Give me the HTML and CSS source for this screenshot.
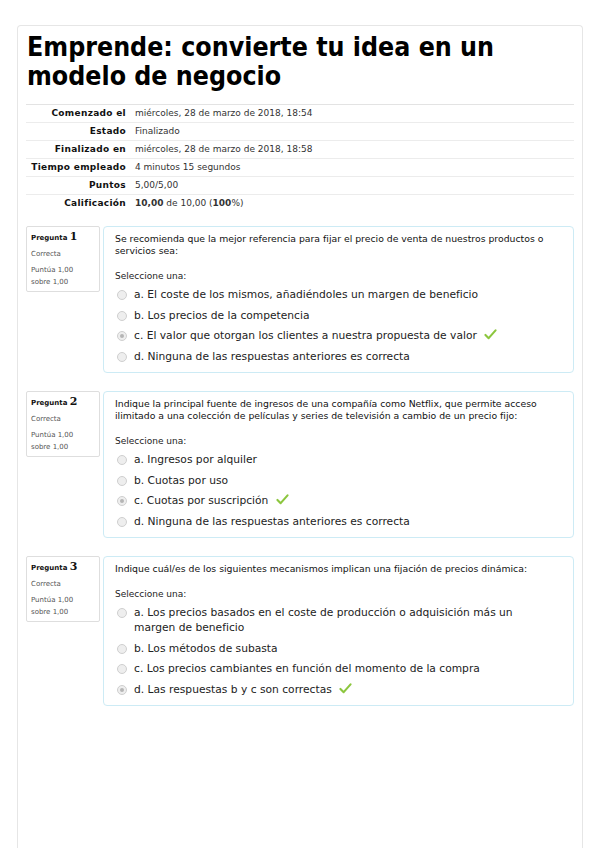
FILE: index.html
```html
<!DOCTYPE html>
<html lang="es">
<head>
<meta charset="utf-8">
<title>Emprende</title>
<link rel="stylesheet" href="styles.css">
</head>
<body>
<div class="page">
  <h1 class="title">Emprende: convierte tu idea en un modelo de negocio</h1>
  <table class="summary">
    <tr><th>Comenzado el</th><td>miércoles, 28 de marzo de 2018, 18:54</td></tr>
    <tr><th>Estado</th><td>Finalizado</td></tr>
    <tr><th>Finalizado en</th><td>miércoles, 28 de marzo de 2018, 18:58</td></tr>
    <tr><th>Tiempo empleado</th><td>4 minutos 15 segundos</td></tr>
    <tr><th>Puntos</th><td>5,00/5,00</td></tr>
    <tr><th>Calificación</th><td><b>10,00</b> de 10,00 (<b>100</b>%)</td></tr>
  </table>

  <div class="que first">
    <div class="info">
      <div class="qno">Pregunta <span class="num">1</span></div>
      <div class="state">Correcta</div>
      <div class="grade">Puntúa 1,00<br>sobre 1,00</div>
    </div>
    <div class="content">
      <div class="qtext">Se recomienda que la mejor referencia para fijar el precio de venta de nuestros productos o servicios sea:</div>
      <div class="prompt">Seleccione una:</div>
      <div class="answers">
        <div class="opt"><span class="radio"></span><span class="lbl">a. El coste de los mismos, añadiéndoles un margen de beneficio</span></div>
        <div class="opt"><span class="radio"></span><span class="lbl">b. Los precios de la competencia</span></div>
        <div class="opt"><span class="radio checked"></span><span class="lbl">c. El valor que otorgan los clientes a nuestra propuesta de valor <svg class="tick" viewBox="0 0 14 12" width="13" height="11"><path d="M1.5 6.5 L5 10 L12.5 1.5" fill="none" stroke="#8cc63e" stroke-width="2.3" stroke-linecap="round" stroke-linejoin="round"/></svg></span></div>
        <div class="opt"><span class="radio"></span><span class="lbl">d. Ninguna de las respuestas anteriores es correcta</span></div>
      </div>
    </div>
  </div>

  <div class="que">
    <div class="info">
      <div class="qno">Pregunta <span class="num">2</span></div>
      <div class="state">Correcta</div>
      <div class="grade">Puntúa 1,00<br>sobre 1,00</div>
    </div>
    <div class="content">
      <div class="qtext">Indique la principal fuente de ingresos de una compañía como Netflix, que permite acceso ilimitado a una colección de películas y series de televisión a cambio de un precio fijo:</div>
      <div class="prompt">Seleccione una:</div>
      <div class="answers">
        <div class="opt"><span class="radio"></span><span class="lbl">a. Ingresos por alquiler</span></div>
        <div class="opt"><span class="radio"></span><span class="lbl">b. Cuotas por uso</span></div>
        <div class="opt"><span class="radio checked"></span><span class="lbl">c. Cuotas por suscripción <svg class="tick" viewBox="0 0 14 12" width="13" height="11"><path d="M1.5 6.5 L5 10 L12.5 1.5" fill="none" stroke="#8cc63e" stroke-width="2.3" stroke-linecap="round" stroke-linejoin="round"/></svg></span></div>
        <div class="opt"><span class="radio"></span><span class="lbl">d. Ninguna de las respuestas anteriores es correcta</span></div>
      </div>
    </div>
  </div>

  <div class="que">
    <div class="info">
      <div class="qno">Pregunta <span class="num">3</span></div>
      <div class="state">Correcta</div>
      <div class="grade">Puntúa 1,00<br>sobre 1,00</div>
    </div>
    <div class="content">
      <div class="qtext">Indique cuál/es de los siguientes mecanismos implican una fijación de precios dinámica:</div>
      <div class="prompt">Seleccione una:</div>
      <div class="answers">
        <div class="opt"><span class="radio"></span><span class="lbl">a. Los precios basados en el coste de producción o adquisición más un margen de beneficio</span></div>
        <div class="opt"><span class="radio"></span><span class="lbl">b. Los métodos de subasta</span></div>
        <div class="opt"><span class="radio"></span><span class="lbl">c. Los precios cambiantes en función del momento de la compra</span></div>
        <div class="opt"><span class="radio checked"></span><span class="lbl">d. Las respuestas b y c son correctas <svg class="tick" viewBox="0 0 14 12" width="13" height="11"><path d="M1.5 6.5 L5 10 L12.5 1.5" fill="none" stroke="#8cc63e" stroke-width="2.3" stroke-linecap="round" stroke-linejoin="round"/></svg></span></div>
      </div>
    </div>
  </div>
</div>
</body>
</html>
```
FILE: styles.css
```css
html, body {
  margin: 0;
  padding: 0;
  background: #ffffff;
}
body {
  font-family: "DejaVu Sans", Verdana, sans-serif;
  color: #1a1a1a;
}
.page {
  margin: 25px 0 0 17px;
  width: 548px;
  min-height: 817px;
  border: 1px solid #e6e6e6;
  border-bottom: none;
  border-radius: 4px 4px 0 0;
  padding: 6px 8px 0 8px;
}
.title {
  font-family: "DejaVu Sans Condensed", "DejaVu Sans", sans-serif;
  font-weight: bold;
  font-size: 26.5px;
  line-height: 29px;
  margin: 0 0 14px 1px;
  color: #000;
}
.summary {
  width: 100%;
  border-collapse: collapse;
  border-top: 1px solid #e3e3e3;
  font-size: 9px;
}
.summary th, .summary td {
  border-bottom: 1px solid #ececec;
  padding: 3px 0 3px 0;
  height: 11px;
  line-height: 11px;
}
.summary th {
  width: 100px;
  text-align: right;
  padding-right: 9px;
  font-weight: bold;
  letter-spacing: 0.3px;
  color: #111;
}
.summary td {
  color: #333;
}
.summary tr:last-child th, .summary tr:last-child td {
  border-bottom: none;
}
.que {
  display: flex;
  gap: 3px;
  margin-top: 18px;
  align-items: flex-start;
}
.que.first {
  margin-top: 14px;
}
.info {
  width: 68px;
  border: 1px solid #dedede;
  border-radius: 2px;
  padding: 4px 0 3px 4px;
  color: #555;
  font-size: 7px;
  line-height: 12px;
}
.qno {
  font-weight: bold;
  color: #111;
  font-size: 7px;
}
.num {
  font-family: "DejaVu Serif", serif;
  font-size: 11px;
}
.state {
  margin-top: 4px;
}
.grade {
  margin-top: 4px;
}
.content {
  flex: 1;
  border: 1px solid #cdebf5;
  border-radius: 4px;
  padding: 6px 10px 6px 11px;
}
.qtext {
  font-size: 9.3px;
  line-height: 12px;
  color: #111;
}
.prompt {
  margin-top: 13px;
  font-size: 9px;
  color: #222;
  line-height: 12px;
}
.answers {
  margin-top: 2px;
  padding-right: 44px;
}
.opt {
  display: flex;
  align-items: flex-start;
  font-size: 10.7px;
  line-height: 15px;
  padding: 3px 0 2.5px 2px;
  color: #222;
}
.radio {
  flex: none;
  width: 8px;
  height: 8px;
  border: 1px solid #cfcfcf;
  border-radius: 50%;
  background: #eeeeee;
  margin: 3px 7px 0 0;
  position: relative;
}
.radio.checked::after {
  content: "";
  position: absolute;
  left: 2px;
  top: 2px;
  width: 4px;
  height: 4px;
  border-radius: 50%;
  background: #b5b5b5;
}
.tick {
  vertical-align: -1px;
  margin-left: 4px;
}
```
